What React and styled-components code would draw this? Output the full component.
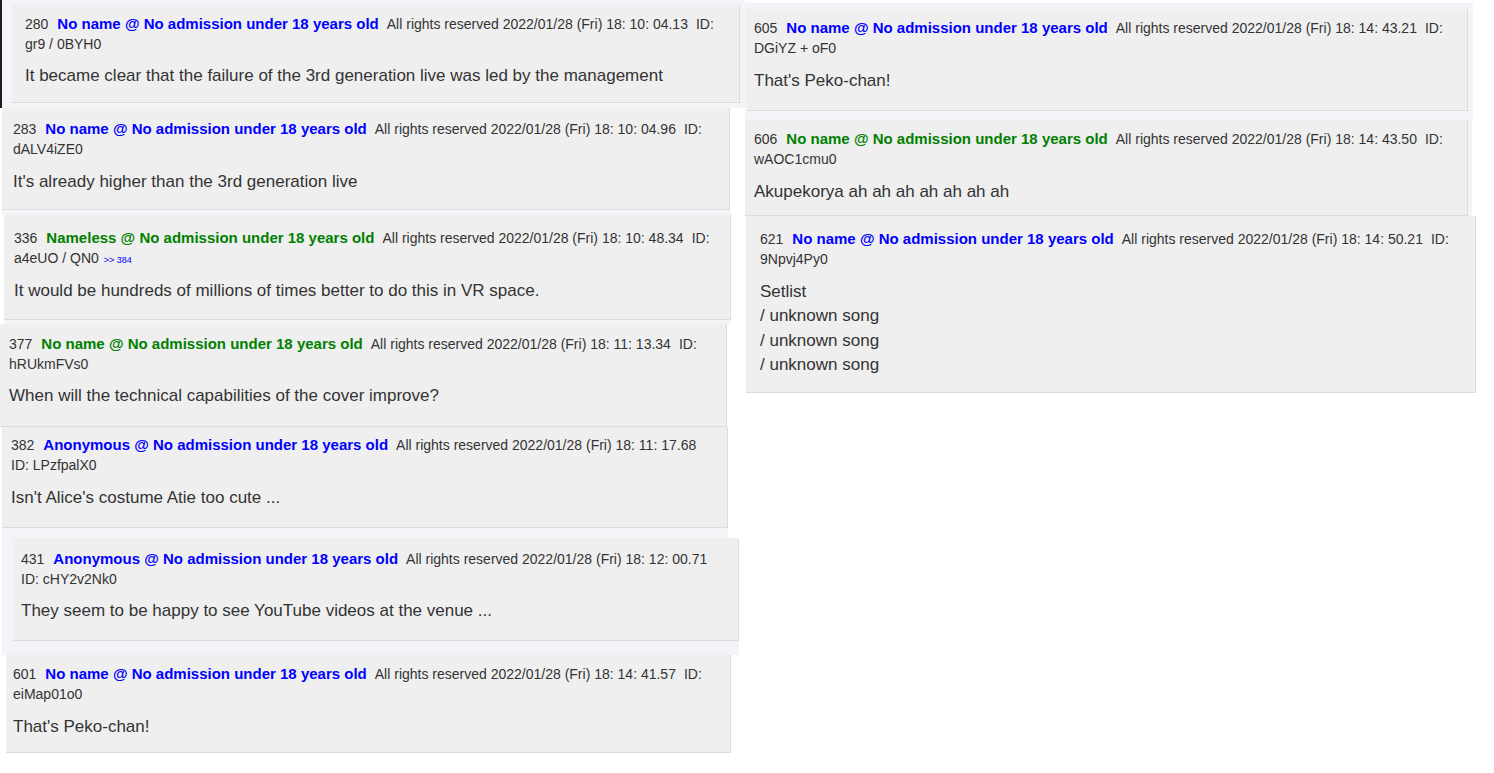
import React from "react";
import styled, { createGlobalStyle } from "styled-components";

const GlobalStyle = createGlobalStyle`
  html, body {
    margin: 0;
    padding: 0;
    background: #ffffff;
  }
  body {
    font-family: "Liberation Sans", Arial, sans-serif;
    color: #333333;
  }
`;

const Board = styled.div`
  display: flex;
  align-items: flex-start;
  width: 1494px;
  height: 773px;
  overflow: hidden;
`;

const Column = styled.div`
  display: flex;
  flex-direction: column;
  width: ${(p) => p.$w}px;
  flex-shrink: 0;
`;

// the pale frame around each cut-out post
const Shot = styled.div`
  box-sizing: border-box;
  display: flex;
  margin-left: ${(p) => p.$ml || 0}px;
  margin-top: ${(p) => p.$mt || 0}px;
  padding: ${(p) => p.$pad || "0"};
  background: #f3f4f7;
  border-left: ${(p) => (p.$edge ? "2px solid #1e1e1e" : "none")};
  align-self: flex-start;
`;

const Card = styled.div`
  box-sizing: border-box;
  width: ${(p) => p.$w}px;
  height: ${(p) => p.$h}px;
  padding: ${(p) => p.$pt}px 12px 0 ${(p) => p.$pl}px;
  background: #efefef;
  border-right: 1px solid #dcdcdc;
  border-bottom: 1px solid #dcdcdc;
  overflow: hidden;
`;

const Head = styled.div`
  font-size: 14px;
  line-height: 21px;
  color: #333333;
`;

const HeadLine = styled.div`
  white-space: nowrap;
  height: 21px;
`;

const Num = styled.span`
  margin-right: 9px;
`;

const Name = styled.span`
  font-size: 15px;
  font-weight: bold;
  color: ${(p) => (p.$green ? "#008000" : "#0000ff")};
  margin-right: 8px;
`;

const IdLabel = styled.span`
  margin-left: 8px;
`;

const Reply = styled.span`
  font-size: 9px;
  line-height: 0;
  color: #0000ff;
  margin-left: 5px;
`;

const Body = styled.div`
  margin-top: 9.5px;
  font-size: 17px;
  line-height: 24.5px;
  color: #333333;
`;

const left = [
  {
    no: 280, name: "No name", date: "18: 10: 04.13", id: "gr9 / 0BYH0", idFirst: true,
    body: ["It became clear that the failure of the 3rd generation live was led by the management"],
    shot: { edge: true, pad: "5px 5px 5px 10px" }, card: { w: 728, h: 98, pt: 7.5, pl: 13 },
  },
  {
    no: 283, name: "No name", date: "18: 10: 04.96", id: "dALV4iZE0", idFirst: true,
    body: ["It's already higher than the 3rd generation live"],
    shot: { ml: 2, pad: "0 0 5px 0" }, card: { w: 728, h: 102, pt: 10, pl: 11 },
  },
  {
    no: 336, name: "Nameless", green: true, date: "18: 10: 48.34", id: "a4eUO / QN0", idFirst: true, reply: ">> 384",
    body: ["It would be hundreds of millions of times better to do this in VR space."],
    shot: { ml: 4, pad: "0 0 4px 0" }, card: { w: 727, h: 105, pt: 12, pl: 10 },
  },
  {
    no: 377, name: "No name", green: true, date: "18: 11: 13.34", id: "hRUkmFVs0", idFirst: true,
    body: ["When will the technical capabilities of the cover improve?"],
    shot: { ml: 0 }, card: { w: 727, h: 103, pt: 8.5, pl: 9 },
  },
  {
    no: 382, name: "Anonymous", date: "18: 11: 17.68", id: "LPzfpalX0", idFirst: false,
    body: ["Isn't Alice's costume Atie too cute ..."],
    shot: { ml: 2, pad: "0 0 10px 0" }, card: { w: 726, h: 101, pt: 7, pl: 9 },
  },
  {
    no: 431, name: "Anonymous", date: "18: 12: 00.71", id: "cHY2v2Nk0", idFirst: false,
    body: ["They seem to be happy to see YouTube videos at the venue ..."],
    shot: { ml: 2, pad: "0 0 14px 11px" }, card: { w: 726, h: 103, pt: 9.5, pl: 8 },
  },
  {
    no: 601, name: "No name", date: "18: 14: 41.57", id: "eiMap01o0", idFirst: true,
    body: ["That's Peko-chan!"],
    shot: { ml: 6 }, card: { w: 725, h: 98, pt: 8, pl: 7 },
  },
];

const right = [
  {
    no: 605, name: "No name", date: "18: 14: 43.21", id: "DGiYZ + oF0", idFirst: true,
    body: ["That's Peko-chan!"],
    shot: { mt: 3, pad: "6px 5px 9px 2px" }, card: { w: 721, h: 102, pt: 8, pl: 7 },
  },
  {
    no: 606, name: "No name", green: true, date: "18: 14: 43.50", id: "wAOC1cmu0", idFirst: true,
    body: ["Akupekorya ah ah ah ah ah ah ah"],
    shot: { pad: "0 4px 0 0" }, card: { w: 723, h: 96, pt: 8, pl: 9 },
  },
  {
    no: 621, name: "No name", date: "18: 14: 50.21", id: "9Npvj4Py0", idFirst: true,
    body: ["Setlist", "/ unknown song", "/ unknown song", "/ unknown song"],
    shot: { ml: 1 }, card: { w: 730, h: 177, pt: 12, pl: 14 },
  },
];

function Post({ post }) {
  const { shot, card } = post;
  return (
    <Shot $ml={shot.ml} $mt={shot.mt} $pad={shot.pad} $edge={shot.edge}>
      <Card $w={card.w} $h={card.h} $pt={card.pt} $pl={card.pl}>
        <Head>
          <HeadLine>
            <Num>{post.no}</Num>
            <Name $green={post.green}>{post.name} @ No admission under 18 years old</Name>
            All rights reserved 2022/01/28 (Fri) {post.date}
            {post.idFirst && <IdLabel>ID:</IdLabel>}
          </HeadLine>
          <HeadLine>
            {post.idFirst ? post.id : `ID: ${post.id}`}
            {post.reply && <Reply>{post.reply}</Reply>}
          </HeadLine>
        </Head>
        <Body>
          {post.body.map((line, i) => (
            <div key={i}>{line}</div>
          ))}
        </Body>
      </Card>
    </Shot>
  );
}

function App() {
  return (
    <>
      <GlobalStyle />
      <Board>
        <Column $w={745}>
          {left.map((p) => (
            <Post key={p.no} post={p} />
          ))}
        </Column>
        <Column $w={749}>
          {right.map((p) => (
            <Post key={p.no} post={p} />
          ))}
        </Column>
      </Board>
    </>
  );
}

export default App;
